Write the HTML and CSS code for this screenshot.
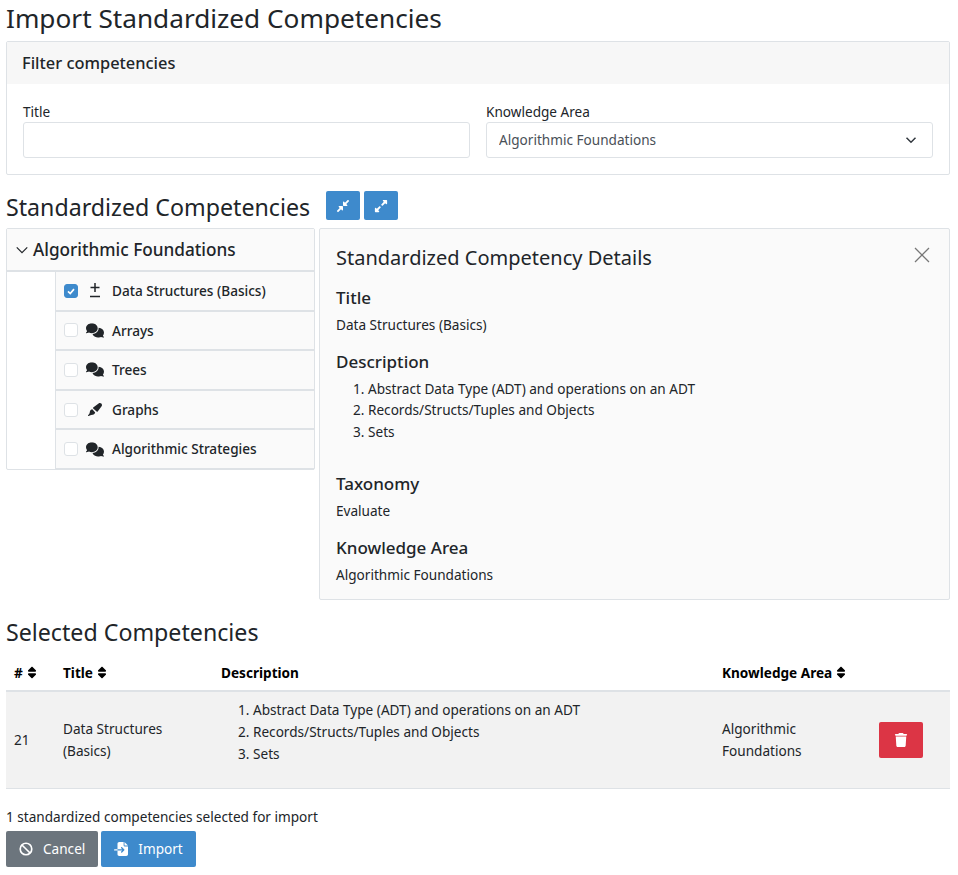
FILE: index.html
```html
<!DOCTYPE html>
<html lang="en">
<head>
	<meta charset="UTF-8">
	<title>Import Standardized Competencies</title>
	<link rel="stylesheet" href="styles.css">
</head>
<body>
	<h1 class="page-title">Import Standardized Competencies</h1>

	<section class="card">
		<h2 class="card-header">Filter competencies</h2>
		<div class="card-body">
			<div class="field">
				<label for="title">Title</label>
				<input id="title" type="text">
			</div>
			<div class="field">
				<label for="area">Knowledge Area</label>
				<select id="area">
					<option>Algorithmic Foundations</option>
				</select>
			</div>
		</div>
	</section>

	<div class="tree-title">
		<h2>Standardized Competencies</h2>
		<button class="btn btn-small btn-blue" type="button">
			<svg viewBox="0 0 448 512" class="icon"><path d="M4.686 427.314L104 328l-32.922-31.029C55.958 281.851 66.666 256 88.048 256h112C213.303 256 224 266.745 224 280v112c0 21.382-25.803 32.09-40.922 16.971L152 376l-99.314 99.314c-6.248 6.248-16.379 6.248-22.627 0L4.686 449.941c-6.248-6.248-6.248-16.379 0-22.627zM443.314 84.686L344 184l32.922 31.029c15.12 15.12 4.412 40.971-16.97 40.971h-112C234.697 256 224 245.255 224 232V120c0-21.382 25.803-32.09 40.922-16.971L296 136l99.314-99.314c6.248-6.248 16.379-6.248 22.627 0l25.373 25.373c6.248 6.248 6.248 16.379 0 22.627z"/></svg>
		</button>
		<button class="btn btn-small btn-blue" type="button">
			<svg viewBox="0 0 448 512" class="icon"><path d="M212.686 315.314L120 408l32.922 31.029c15.12 15.12 4.412 40.971-16.97 40.971h-112C10.697 480 0 469.255 0 456V344c0-21.382 25.803-32.09 40.922-16.971L72 360l92.686-92.686c6.248-6.248 16.379-6.248 22.627 0l25.373 25.373c6.249 6.248 6.249 16.378 0 22.627zm22.628-118.628L328 104l-32.922-31.029C279.958 57.851 290.666 32 312.048 32h112C437.303 32 448 42.745 448 56v112c0 21.382-25.803 32.09-40.922 16.971L376 152l-92.686 92.686c-6.248 6.248-16.379 6.248-22.627 0l-25.373-25.373c-6.249-6.248-6.249-16.378 0-22.627z"/></svg>
		</button>
	</div>

	<div class="browse">
		<div class="tree">
			<div class="tree-head">
				<svg viewBox="0 0 16 16" class="chevron"><path d="M2 5l6 6 6-6" fill="none" stroke="currentColor" stroke-width="1.4"/></svg>
				<span>Algorithmic Foundations</span>
			</div>
			<ul class="tree-list">
				<li>
					<input type="checkbox" checked>
					<svg viewBox="0 0 18 15" class="row-icon"><path d="M9 0v9M4.5 4.5h9M4 13.5h10" fill="none" stroke="currentColor" stroke-width="1.5"/></svg>
					<span>Data Structures (Basics)</span>
				</li>
				<li>
					<input type="checkbox">
					<svg viewBox="0 0 640 512" class="row-icon"><use href="#comments"/></svg>
					<span>Arrays</span>
				</li>
				<li>
					<input type="checkbox">
					<svg viewBox="0 0 640 512" class="row-icon"><use href="#comments"/></svg>
					<span>Trees</span>
				</li>
				<li>
					<input type="checkbox">
					<svg viewBox="0 0 18 15" class="row-icon"><path d="M7.2 6.4l3.4 3c.4.3.8.3 1.1 0l3.9-5.1c.9-1.2.2-2.3-.3-2.8s-1.7-.9-2.7 0L7.2 5.4c-.3.3-.3.7 0 1zM6.3 7.2c-1.3.2-2.2 1-2.4 2.2l-.3 1.8L2 13.4c-.2.4.2.8.6.6l2.5-1.1 1.7-.2c1.2-.2 2.1-1 2.4-2.2z"/></svg>
					<span>Graphs</span>
				</li>
				<li>
					<input type="checkbox">
					<svg viewBox="0 0 640 512" class="row-icon"><use href="#comments"/></svg>
					<span>Algorithmic Strategies</span>
				</li>
			</ul>
		</div>

		<div class="details">
			<div class="details-head">
				<h3>Standardized Competency Details</h3>
				<svg viewBox="0 0 16 16" class="close"><path d="M1 1l14 14M15 1L1 15" fill="none" stroke="currentColor" stroke-width="1.3"/></svg>
			</div>
			<h4>Title</h4>
			<p>Data Structures (Basics)</p>
			<h4>Description</h4>
			<ol class="desc-list">
				<li>Abstract Data Type (ADT) and operations on an ADT</li>
				<li>Records/Structs/Tuples and Objects</li>
				<li>Sets</li>
			</ol>
			<h4>Taxonomy</h4>
			<p>Evaluate</p>
			<h4>Knowledge Area</h4>
			<p>Algorithmic Foundations</p>
		</div>
	</div>

	<h2 class="selected-title">Selected Competencies</h2>

	<table class="selected">
		<thead>
			<tr>
				<th class="col-id">#<svg viewBox="0 0 320 512" class="sort"><use href="#sort"/></svg></th>
				<th class="col-title">Title<svg viewBox="0 0 320 512" class="sort"><use href="#sort"/></svg></th>
				<th class="col-desc">Description</th>
				<th class="col-area">Knowledge Area<svg viewBox="0 0 320 512" class="sort"><use href="#sort"/></svg></th>
				<th></th>
			</tr>
		</thead>
		<tbody>
			<tr>
				<td>21</td>
				<td>Data Structures (Basics)</td>
				<td>
					<ol class="desc-list">
						<li>Abstract Data Type (ADT) and operations on an ADT</li>
						<li>Records/Structs/Tuples and Objects</li>
						<li>Sets</li>
					</ol>
				</td>
				<td>Algorithmic Foundations</td>
				<td>
					<button class="btn btn-red" type="button">
						<svg viewBox="0 0 448 512" class="icon"><path d="M135.2 17.7L128 32H32C14.3 32 0 46.3 0 64S14.3 96 32 96H416c17.7 0 32-14.3 32-32s-14.3-32-32-32H320l-7.2-14.3C307.4 6.8 296.3 0 284.2 0H163.8c-12.1 0-23.2 6.8-28.6 17.7zM416 128H32L53.2 467c1.6 25.3 22.6 45 47.9 45H346.9c25.3 0 46.3-19.7 47.9-45L416 128z"/></svg>
					</button>
				</td>
			</tr>
		</tbody>
	</table>

	<p class="count">1 standardized competencies selected for import</p>
	<div class="actions">
		<button class="btn btn-grey" type="button">
			<svg viewBox="0 0 16 16" class="icon"><circle cx="8" cy="8" r="6.6" fill="none" stroke="currentColor" stroke-width="1.9"/><path d="M3.4 3.4l9.2 9.2" fill="none" stroke="currentColor" stroke-width="1.9"/></svg>
			Cancel
		</button>
		<button class="btn btn-blue" type="button">
			<svg viewBox="0 0 512 512" class="icon"><path d="M128 64c0-35.3 28.7-64 64-64H352V128c0 17.7 14.3 32 32 32H512V448c0 35.3-28.7 64-64 64H192c-35.3 0-64-28.7-64-64V312H302.1l-39 39c-9.4 9.4-9.4 24.6 0 33.9s24.6 9.4 33.9 0l80-80c9.4-9.4 9.4-24.6 0-33.9l-80-80c-9.4-9.4-24.6-9.4-33.9 0s-9.4 24.6 0 33.9l39 39H128V64zm0 200v48H24c-13.3 0-24-10.7-24-24s10.7-24 24-24H128zM512 128H384V0L512 128z"/></svg>
			Import
		</button>
	</div>

	<svg class="defs" width="0" height="0">
		<symbol id="comments" viewBox="0 0 640 512"><path d="M208 352c114.9 0 208-78.8 208-176S322.9 0 208 0S0 78.8 0 176c0 38.6 14.7 74.3 39.6 103.4c-3.5 9.4-8.7 17.7-14.2 24.7c-4.8 6.2-9.7 11-13.3 14.3c-1.8 1.6-3.3 2.9-4.3 3.7c-.5 .4-.9 .7-1.1 .8l-.2 .2 0 0 0 0C1 327.2-1.4 334.4 .8 340.9S9.1 352 16 352c21.8 0 43.8-5.6 62.1-12.5c9.2-3.5 17.8-7.4 25.3-11.4C134.1 343.3 169.8 352 208 352zM448 176c0 112.3-99.1 196.9-216.5 207C255.8 457.7 336.1 512 432 512c38.2 0 73.9-8.7 104.7-23.9c7.5 4 16 7.9 25.2 11.4c18.3 6.9 40.3 12.5 62.1 12.5c6.9 0 13.1-4.5 15.2-11.1c2.1-6.6-.2-13.8-5.8-17.9l0 0 0 0-.2-.2c-.2-.2-.6-.4-1.1-.8c-1-.8-2.5-2-4.3-3.7c-3.6-3.3-8.5-8.1-13.3-14.3c-5.5-7-10.7-15.4-14.2-24.7c24.9-29 39.6-64.7 39.6-103.4c0-92.8-84.9-168.9-192.6-175.5c.4 5.1 .6 10.3 .6 15.5z"/></symbol>
		<symbol id="sort" viewBox="0 0 320 512"><path d="M137.4 41.4c12.5-12.5 32.8-12.5 45.3 0l128 128c9.2 9.2 11.9 22.9 6.9 34.9s-16.6 19.8-29.6 19.8H32c-12.9 0-24.6-7.8-29.6-19.8s-2.2-25.7 6.9-34.9l128-128zm0 429.3l-128-128c-9.2-9.2-11.9-22.9-6.9-34.9s16.6-19.8 29.6-19.8H288c12.9 0 24.6 7.8 29.6 19.8s2.2 25.7-6.9 34.9l-128 128c-12.5 12.5-32.8 12.5-45.3 0z"/></symbol>
	</svg>
</body>
</html>
```

FILE: styles.css
```css
*{
	margin: 0;
	padding: 0;
	box-sizing: border-box;
}
body{
	padding: 0 8px 0 6px;
	font-family: "Noto Sans", "Open Sans", sans-serif;
	font-size: 13.6px;
	line-height: 21.6px;
	color: #212529;
	background: #fff;
}
.defs{
	position: absolute;
}
.page-title{
	font-size: 26.2px;
	font-weight: 400;
	line-height: 36px;
	margin-bottom: 5px;
}
/* filter card */
.card{
	border: 1px solid #dee2e6;
	border-radius: 2px;
	height: 134px;
}
.card-header{
	height: 42px;
	padding: 0 15px;
	background: #f7f7f7;
	font-size: 16.4px;
	font-weight: 500;
	line-height: 41px;
}
.card-body{
	display: flex;
	gap: 16px;
	padding: 17px 16px 0;
}
.field{
	flex: 1;
}
.field label{
	display: block;
	height: 21px;
}
.field input,.field select{
	display: block;
	width: 100%;
	height: 36px;
	border: 1px solid #dee2e6;
	border-radius: 3px;
	background-color: #fff;
	font: inherit;
	color: #495057;
	padding: 0 12px;
	appearance: none;
}
.field select{
	background-image: url("data:image/svg+xml,%3Csvg xmlns='http://www.w3.org/2000/svg' viewBox='0 0 16 16'%3E%3Cpath d='M2 5l6 6 6-6' fill='none' stroke='%23343a40' stroke-width='2'/%3E%3C/svg%3E");
	background-repeat: no-repeat;
	background-position: right 15px center;
	background-size: 12px;
}
/* section titles */
.tree-title{
	display: flex;
	align-items: flex-start;
	gap: 4px;
	height: 37px;
	margin-top: 16px;
}
.tree-title h2,.selected-title{
	font-size: 23.2px;
	font-weight: 400;
	line-height: 32px;
}
.tree-title h2{
	margin-right: 12px;
}
.btn{
	display: inline-flex;
	align-items: center;
	justify-content: center;
	gap: 10px;
	height: 36px;
	padding: 0 13px;
	border: 0;
	border-radius: 2px;
	font: inherit;
	color: #fff;
}
.btn-small{
	height: 29px;
	padding: 0 10px;
}
.btn-blue{
	background: #3e8acc;
}
.btn-grey{
	background: #6c757d;
}
.btn-red{
	width: 44px;
	background: #dc3545;
}
.icon{
	width: 14px;
	height: 14px;
	fill: currentColor;
}
/* tree */
.browse{
	display: flex;
	align-items: flex-start;
	gap: 4px;
}
.tree{
	width: 309px;
	height: 242px;
	border: 1px solid #dee2e6;
	border-radius: 2px;
}
.tree-head{
	display: flex;
	align-items: center;
	gap: 4px;
	height: 43px;
	padding-left: 8px;
	background: #fafafa;
	border-bottom: 2px solid #dee2e6;
	font-size: 17.2px;
	font-weight: 500;
}
.chevron{
	width: 14px;
	height: 14px;
}
.tree-list{
	list-style: none;
	margin-left: 48px;
	border-left: 1px solid #dee2e6;
}
.tree-list li{
	display: flex;
	align-items: center;
	height: 39.6px;
	padding-left: 8px;
	background: #fafafa;
	border-bottom: 2px solid #dee2e6;
	font-weight: 500;
}
.tree-list input{
	width: 14px;
	height: 14px;
	margin-right: 8px;
	border: 1px solid #dee2e6;
	border-radius: 3px;
	background: #fff;
	appearance: none;
}
.tree-list input:checked{
	border-color: #3e8acc;
	background: #3e8acc url("data:image/svg+xml,%3Csvg xmlns='http://www.w3.org/2000/svg' viewBox='0 0 16 16'%3E%3Cpath d='M4 8.5l3 3 5-6' fill='none' stroke='%23fff' stroke-width='2.2'/%3E%3C/svg%3E") center / 12px no-repeat;
}
.row-icon{
	width: 18px;
	height: 15px;
	margin-right: 8px;
	fill: currentColor;
}
/* details */
.details{
	flex: 1;
	height: 372px;
	padding: 15px 16px;
	background: #fafafa;
	border: 1px solid #dee2e6;
	border-radius: 2px;
}
.details-head{
	display: flex;
	align-items: center;
	justify-content: space-between;
	height: 28px;
	margin-bottom: 14px;
}
.details-head h3{
	font-size: 20px;
	font-weight: 400;
}
.close{
	width: 16px;
	height: 16px;
	margin-right: 3px;
	margin-bottom: 6px;
	color: #777;
}
.details h4{
	font-size: 17px;
	font-weight: 500;
	line-height: 24px;
	margin-bottom: 4px;
}
.details p{
	margin-bottom: 14px;
}
.desc-list{
	padding-left: 32px;
	margin-bottom: 30px;
}
/* selected table */
.selected-title{
	margin-top: 16px;
	margin-bottom: 7px;
}
.selected{
	width: 100%;
	border-collapse: collapse;
	table-layout: fixed;
}
.selected th{
	height: 36px;
	padding: 0 8px;
	text-align: left;
	font-weight: 700;
	color: #000;
	vertical-align: middle;
}
.col-id{
	width: 49px;
}
.col-title{
	width: 158px;
}
.col-desc{
	width: 501px;
}
.col-area{
	width: 157px;
}
.sort{
	width: 10px;
	height: 13px;
	margin-left: 4px;
	vertical-align: -1px;
}
.selected td{
	height: 97px;
	padding: 0 8px;
	background: #f2f2f2;
	border-top: 2px solid #dee2e6;
	border-bottom: 1px solid #dee2e6;
	vertical-align: middle;
}
.selected td .desc-list{
	margin-bottom: 16px;
}
.count{
	margin-top: 17px;
}
.actions{
	display: flex;
	gap: 3px;
	margin-top: 4px;
}
```
